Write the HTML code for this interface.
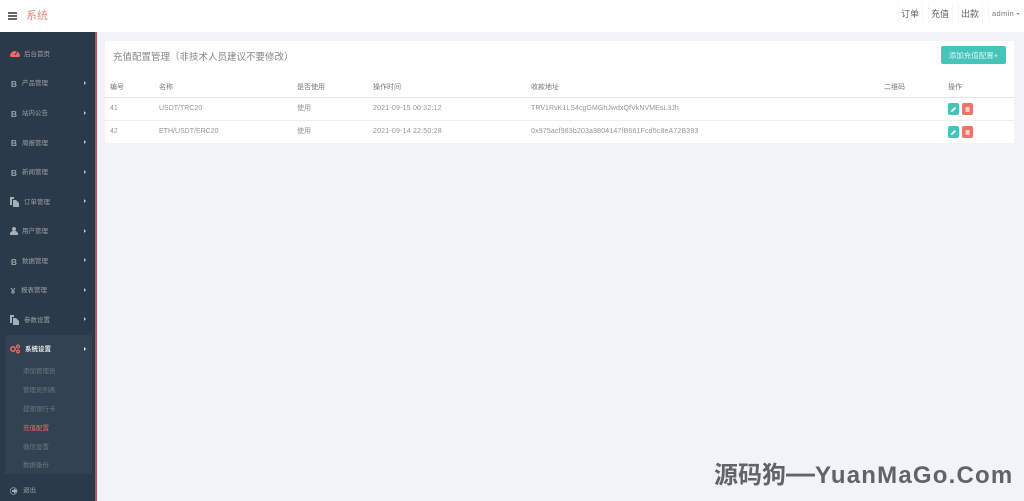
<!DOCTYPE html>
<html lang="zh">
<head>
<meta charset="utf-8">
<title>充值配置管理</title>
<style>
*{box-sizing:border-box;margin:0;padding:0}
html,body{width:1024px;height:501px;overflow:hidden;background:#f1f3f8;font-family:"Liberation Sans","Noto Sans CJK SC",sans-serif}
#w{position:absolute;left:0;top:0;width:1024px;height:501px;overflow:hidden;filter:blur(.3px)}
.abs{position:absolute;white-space:nowrap}
#top{position:absolute;left:0;top:0;width:1024px;height:32px;background:#fff}
.bg{position:absolute;left:8px;width:9px;height:2px;background:#666}
#logo{left:26px;top:8px;font-size:11px;line-height:16px;color:#e58a80}
.tl{top:7px;font-size:9px;line-height:14px;color:#666}
.tb{position:absolute;top:3px;width:1px;height:20px;background:#f6f6f6}
#side{position:absolute;left:0;top:32px;width:95px;height:469px;background:#2b3a49}
#bar{position:absolute;left:95px;top:32px;width:2px;height:469px;background:#b5565a}
#sub{position:absolute;left:5px;top:335px;width:87px;height:139px;background:#324251;border-radius:2px}
.m{position:absolute;font-size:6.5px;line-height:10px;color:#98a1ab;white-space:nowrap;margin-top:1px}
.ic{position:absolute;font-size:8.5px;line-height:10px;color:#99a2aa;font-weight:bold;width:12px;text-align:center;margin-top:1px}
.ar{position:absolute;left:84px;width:0;height:0;border-left:2.5px solid #c3c8cd;border-top:2.5px solid transparent;border-bottom:2.5px solid transparent}
.s{position:absolute;left:23px;font-size:6.5px;line-height:10px;color:#6d7884;white-space:nowrap;margin-top:1px}
#card{position:absolute;left:105px;top:41px;width:909px;height:102px;background:#fff;border-radius:2px}
#ttl{left:113px;top:51px;font-size:9.5px;line-height:14px;color:#858585}
#add{position:absolute;left:941px;top:46px;width:65px;height:18px;background:#45c4ba;border-radius:2px;color:#dff5f3;font-size:7.5px;line-height:19px;text-align:center;white-space:nowrap}
.th{position:absolute;top:82px;font-size:7px;line-height:10px;color:#777;white-space:nowrap;margin-top:1px}
.td{position:absolute;font-size:7px;line-height:10px;color:#949494;white-space:nowrap;margin-top:1.500px}
.hl{position:absolute;left:105px;width:909px}
.btn{position:absolute;width:11px;height:12px;border-radius:2px}
.g{left:948px;background:#45c4ba}
.r{left:962px;background:#ec7468}
.btn svg{position:absolute;left:2px;top:2.5px;width:7px;height:7px}
#wm{left:714px;top:461px;font-size:24px;line-height:30px;font-weight:bold;color:#626367}
#wm .d{font-size:29px;line-height:24px;font-weight:bold}
#wm .l{letter-spacing:1.2px}
</style>
</head>
<body>
<div id="w">
<div id="top"></div>
<div class="bg" style="top:12px"></div>
<div class="bg" style="top:15px"></div>
<div class="bg" style="top:18px"></div>
<div id="logo" class="abs">系统</div>
<div class="abs tl" style="left:901px">订单</div>
<div class="abs tl" style="left:931px">充值</div>
<div class="abs tl" style="left:961px">出款</div>
<div class="abs" style="left:992px;top:8px;font-size:7.5px;line-height:12px;color:#777;letter-spacing:.3px">admin</div>
<div class="abs" style="left:1016px;top:13px;width:0;height:0;border-top:2px solid #999;border-left:2px solid transparent;border-right:2px solid transparent"></div>
<div class="tb" style="left:898px"></div>
<div class="tb" style="left:922px"></div>
<div class="tb" style="left:928px"></div>
<div class="tb" style="left:952px"></div>
<div class="tb" style="left:958px"></div>
<div class="tb" style="left:982px"></div>
<div class="tb" style="left:988px"></div>

<div id="side"></div>
<div id="bar"></div>
<div id="sub"></div>

<svg class="abs" style="left:10px;top:49px" width="10" height="8" viewBox="0 0 10 8"><path d="M0 7a5 5 0 0 1 10 0l-1 1H1z" fill="#ef6a60"/><path d="M5 6 7 3" stroke="#2b3a49" stroke-width="1"/></svg>
<div class="m" style="left:24px;top:49px">后台首页</div>

<div class="ic" style="left:8px;top:78px">B</div><div class="m" style="left:22px;top:78px">产品管理</div><div class="ar" style="top:81px"></div>
<div class="ic" style="left:8px;top:108px">B</div><div class="m" style="left:22px;top:108px">站内公告</div><div class="ar" style="top:111px"></div>
<div class="ic" style="left:8px;top:137px">B</div><div class="m" style="left:22px;top:138px">周报管理</div><div class="ar" style="top:140px"></div>
<div class="ic" style="left:8px;top:167px">B</div><div class="m" style="left:22px;top:167px">新闻管理</div><div class="ar" style="top:170px"></div>

<svg class="abs" style="left:10px;top:197px" width="9" height="10" viewBox="0 0 9 10"><path d="M0 0h4v2H2v6H0z" fill="#a7afb6"/><path d="M3 3h3l3 3v4H3z" fill="#a7afb6"/></svg>
<div class="m" style="left:24px;top:197px">订单管理</div><div class="ar" style="top:199px"></div>

<svg class="abs" style="left:10px;top:227px" width="8" height="8" viewBox="0 0 8 8"><circle cx="4" cy="2" r="2" fill="#a7afb6"/><path d="M0 8V6l2-2h4l2 2v2z" fill="#a7afb6"/></svg>
<div class="m" style="left:22px;top:226px">用户管理</div><div class="ar" style="top:229px"></div>

<div class="ic" style="left:8px;top:256px">B</div><div class="m" style="left:22px;top:256px">数据管理</div><div class="ar" style="top:258px"></div>
<div class="ic" style="left:7px;top:285px">¥</div><div class="m" style="left:21px;top:285px">报表管理</div><div class="ar" style="top:288px"></div>

<svg class="abs" style="left:10px;top:315px" width="9" height="10" viewBox="0 0 9 10"><path d="M0 0h4v2H2v6H0z" fill="#a7afb6"/><path d="M3 3h3l3 3v4H3z" fill="#a7afb6"/></svg>
<div class="m" style="left:24px;top:315px">参数设置</div><div class="ar" style="top:317px"></div>

<svg class="abs" style="left:10px;top:344px" width="10" height="10" viewBox="0 0 10 10"><circle cx="3" cy="5" r="2.2" fill="none" stroke="#ef6a60" stroke-width="1.5"/><circle cx="8" cy="2.5" r="1.4" fill="none" stroke="#ef6a60" stroke-width="1.2"/><circle cx="8" cy="7.5" r="1.4" fill="none" stroke="#ef6a60" stroke-width="1.2"/></svg>
<div class="m" style="left:25px;top:344px;color:#e8eaec;font-weight:bold">系统设置</div><div class="ar" style="top:347px;border-left-color:#fff"></div>

<div class="s" style="top:366px">添加管理员</div>
<div class="s" style="top:385px">管理员列表</div>
<div class="s" style="top:404px">提现银行卡</div>
<div class="s" style="top:423px;color:#ef6a60">充值配置</div>
<div class="s" style="top:442px">微信设置</div>
<div class="s" style="top:460px">数据备份</div>

<svg class="abs" style="left:10px;top:487px" width="8" height="8" viewBox="0 0 8 8"><circle cx="3.5" cy="4" r="3.4" fill="none" stroke="#8f99a3" stroke-width=".8"/><path d="M2 3h2V1.5L7.5 4 4 6.500V5H2z" fill="#a7afb6"/></svg>
<div class="m" style="left:23px;top:485px">退出</div>

<div id="card"></div>
<div id="ttl" class="abs">充值配置管理（非技术人员建议不要修改）</div>
<div id="add">添加充值配置+</div>

<div class="th" style="left:110px">编号</div>
<div class="th" style="left:159px">名称</div>
<div class="th" style="left:297px">是否使用</div>
<div class="th" style="left:373px">操作时间</div>
<div class="th" style="left:531px">收款地址</div>
<div class="th" style="left:884px">二维码</div>
<div class="th" style="left:948px">操作</div>

<div class="hl" style="top:97px;height:1px;background:#e4e6e8"></div>
<div class="hl" style="top:120px;height:1px;background:#edeff1"></div>

<div class="td" style="left:110px;top:102px">41</div>
<div class="td" style="left:159px;top:102px">USDT/TRC20</div>
<div class="td" style="left:297px;top:102px">使用</div>
<div class="td" style="left:373px;top:102px;letter-spacing:.2px">2021-09-15 00:32:12</div>
<div class="td" style="left:531px;top:102px;letter-spacing:.06px">TRV1RvK1LS4cgGMGhJwdxQfVkNVMEsL3Jh</div>
<div class="btn g" style="top:103px"><svg viewBox="0 0 7 7"><path d="M1 6V4.700L4.700 1 6 2.300 2.300 6z" fill="#fff"/></svg></div>
<div class="btn r" style="top:103px"><svg viewBox="0 0 7 7"><path d="M1.500 1h4v5h-4zM1 1h5" fill="#f7d0cb"/></svg></div>

<div class="td" style="left:110px;top:125px">42</div>
<div class="td" style="left:159px;top:125px">ETH/USDT/ERC20</div>
<div class="td" style="left:297px;top:125px">使用</div>
<div class="td" style="left:373px;top:125px;letter-spacing:.2px">2021-09-14 22:50:28</div>
<div class="td" style="left:531px;top:125px;letter-spacing:.16px">0x975acf983b203a9804147fB661Fcd5c8eA72B393</div>
<div class="btn g" style="top:126px"><svg viewBox="0 0 7 7"><path d="M1 6V4.700L4.700 1 6 2.300 2.300 6z" fill="#fff"/></svg></div>
<div class="btn r" style="top:126px"><svg viewBox="0 0 7 7"><path d="M1.500 1h4v5h-4zM1 1h5" fill="#f7d0cb"/></svg></div>

<div id="wm" class="abs">源码狗<span class="d">—</span><span class="l">YuanMaGo.Com</span></div>
</div>
</body>
</html>
